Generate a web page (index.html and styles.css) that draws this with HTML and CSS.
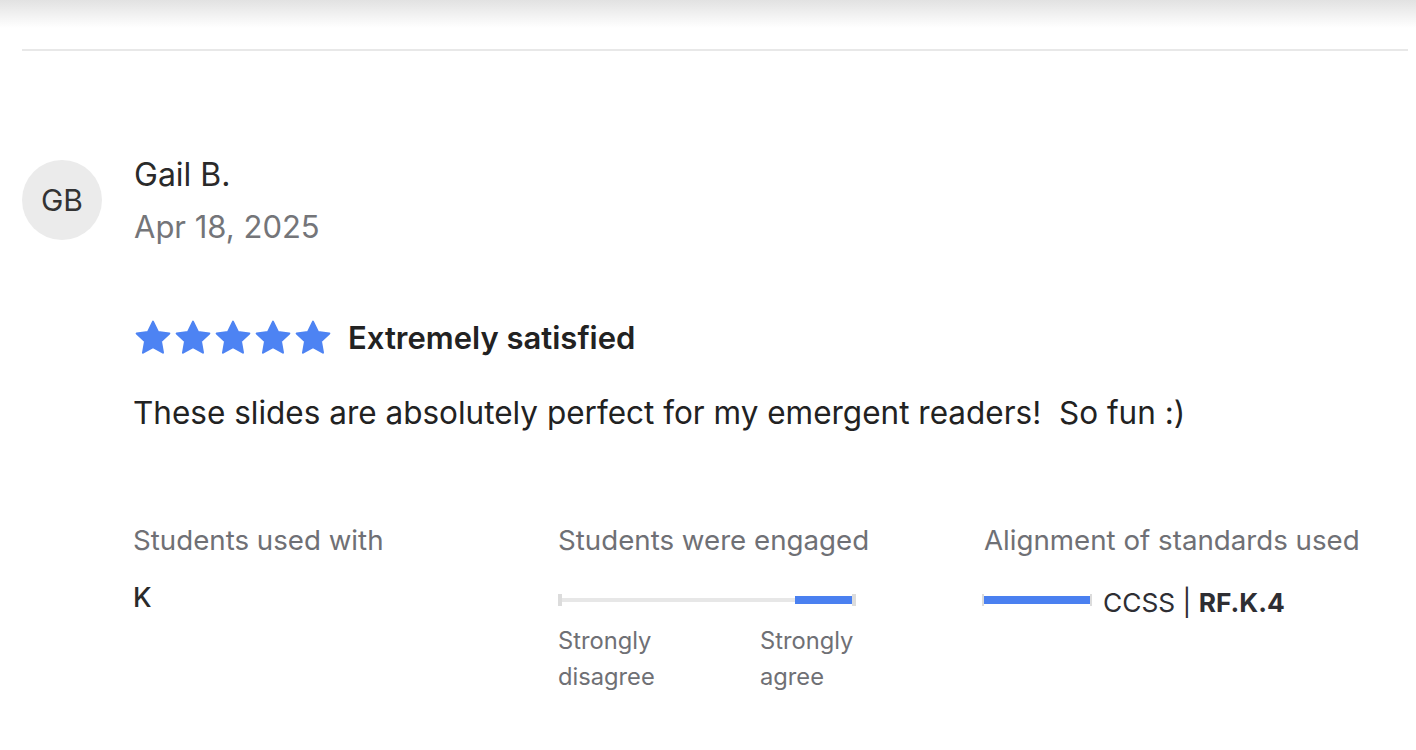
FILE: index.html
```html
<!DOCTYPE html>
<html>
<head>
<meta charset="utf-8">
<link rel="stylesheet" href="styles.css">
</head>
<body>
<div class="topshade"></div>
<div class="page">
  <div class="divider"></div>
  <div class="review">
    <div class="author">
      <div class="avatar">GB</div>
      <div class="meta">
        <div class="name">Gail B.</div>
        <div class="date">Apr 18, 2025</div>
      </div>
    </div>
    <div class="body">
      <div class="rating">
        <div class="stars">
          <svg class="star" viewBox="0 0 24 24"><path d="M12 2.2l3 6.2 6.8.9-5 4.7 1.2 6.8L12 17.5l-6 3.3 1.2-6.8-5-4.7 6.8-.9z"/></svg>
          <svg class="star" viewBox="0 0 24 24"><path d="M12 2.2l3 6.2 6.8.9-5 4.7 1.2 6.8L12 17.5l-6 3.3 1.2-6.8-5-4.7 6.8-.9z"/></svg>
          <svg class="star" viewBox="0 0 24 24"><path d="M12 2.2l3 6.2 6.8.9-5 4.7 1.2 6.8L12 17.5l-6 3.3 1.2-6.8-5-4.7 6.8-.9z"/></svg>
          <svg class="star" viewBox="0 0 24 24"><path d="M12 2.2l3 6.2 6.8.9-5 4.7 1.2 6.8L12 17.5l-6 3.3 1.2-6.8-5-4.7 6.8-.9z"/></svg>
          <svg class="star" viewBox="0 0 24 24"><path d="M12 2.2l3 6.2 6.8.9-5 4.7 1.2 6.8L12 17.5l-6 3.3 1.2-6.8-5-4.7 6.8-.9z"/></svg>
        </div>
        <div class="rating-label">Extremely satisfied</div>
      </div>
      <p class="text">These slides are absolutely perfect for my emergent readers!&nbsp; So fun :)</p>
      <div class="facts">
        <div class="fact">
          <div class="fact-title">Students used with</div>
          <div class="fact-value">K</div>
        </div>
        <div class="fact">
          <div class="fact-title">Students were engaged</div>
          <div class="scale">
            <div class="track"><div class="fill"></div></div>
          </div>
          <div class="scale-labels">
            <span>Strongly<br>disagree</span>
            <span>Strongly<br>agree</span>
          </div>
        </div>
        <div class="fact">
          <div class="fact-title">Alignment of standards used</div>
          <div class="standard">
            <div class="std-bar"></div>
            <span class="std-text">CCSS | <b>RF.K.4</b></span>
          </div>
        </div>
      </div>
    </div>
  </div>
</div>
</body>
</html>
```
FILE: styles.css
```css
html, body {
  margin: 0;
  padding: 0;
  background: #fff;
}
body {
  font-family: Inter, "Noto Sans", sans-serif;
  color: #222;
  width: 1416px;
  height: 750px;
  overflow: hidden;
  position: relative;
}
.topshade {
  position: absolute;
  left: 0;
  top: 0;
  width: 100%;
  height: 28px;
  background: linear-gradient(to bottom, #e2e2e2, rgba(255,255,255,0));
}
.page {
  padding: 49px 8px 0 22px;
}
.divider {
  height: 2px;
  background: #e8e8e8;
}
.review {
  padding-top: 109px;
}
.author {
  display: flex;
  align-items: flex-start;
}
.avatar {
  width: 80px;
  height: 80px;
  border-radius: 50%;
  background: #ebebeb;
  color: #333;
  font-size: 30px;
  display: flex;
  align-items: center;
  justify-content: center;
}
.meta {
  margin-left: 32px;
  margin-top: -5px;
}
.name {
  font-size: 32px;
  line-height: 40px;
  color: #2a2a2a;
}
.date {
  font-size: 31px;
  line-height: 64px;
  color: #747579;
}
.body {
  padding-left: 111px;
}
.rating {
  display: flex;
  align-items: center;
  height: 38px;
  margin-top: 60px;
}
.stars {
  display: flex;
  gap: 0;
}
.star {
  width: 40px;
  height: 40px;
  fill: #4d83f3;
  stroke: #4d83f3;
  stroke-width: 1.2;
  stroke-linejoin: round;
}
.rating-label {
  margin-left: 15px;
  font-size: 31px;
  line-height: 38px;
  font-weight: 600;
  color: #222;
}
.text {
  margin: 36px 0 0 0;
  font-size: 31.5px;
  line-height: 40px;
  color: #222;
}
.facts {
  display: grid;
  grid-template-columns: 425px 426px 1fr;
  margin-top: 88px;
}
.fact-title {
  font-size: 27.7px;
  line-height: 38px;
  color: #6f7075;
}
.fact-value {
  margin-top: 20px;
  font-size: 27px;
  line-height: 38px;
  font-weight: 500;
  color: #2a2a2a;
}
.scale {
  margin-top: 35px;
  width: 298px;
  height: 12px;
  display: flex;
  align-items: center;
}
.track {
  position: relative;
  width: 100%;
  height: 4px;
  background: #e7e7e7;
}
.track::before,
.track::after {
  content: "";
  position: absolute;
  top: -4px;
  width: 4px;
  height: 12px;
  background: #dcdcdc;
}
.track::before { left: 0; }
.track::after { right: 0; }
.fill {
  position: absolute;
  right: 2px;
  top: -2px;
  width: 59px;
  height: 8px;
  background: #4a80f0;
}
.scale-labels {
  display: grid;
  grid-template-columns: 202px auto;
  margin-top: 17px;
  font-size: 23.7px;
  line-height: 36px;
  color: #6f7075;
}
.standard {
  display: flex;
  align-items: center;
  margin-top: 24px;
  height: 38px;
}
.std-bar {
  position: relative;
  width: 110px;
  height: 12px;
  margin-left: -2px;
  margin-top: -4px;
  border-left: 2px solid #dcdcdc;
  border-right: 2px solid #dcdcdc;
  box-sizing: border-box;
}
.std-bar::before {
  content: "";
  position: absolute;
  left: 0;
  right: 0;
  top: 2px;
  height: 8px;
  background: #4a80f0;
}
.std-text {
  margin-left: 11px;
  font-size: 26.3px;
  color: #2e2e33;
}
.std-text b {
  font-weight: 700;
}
```
